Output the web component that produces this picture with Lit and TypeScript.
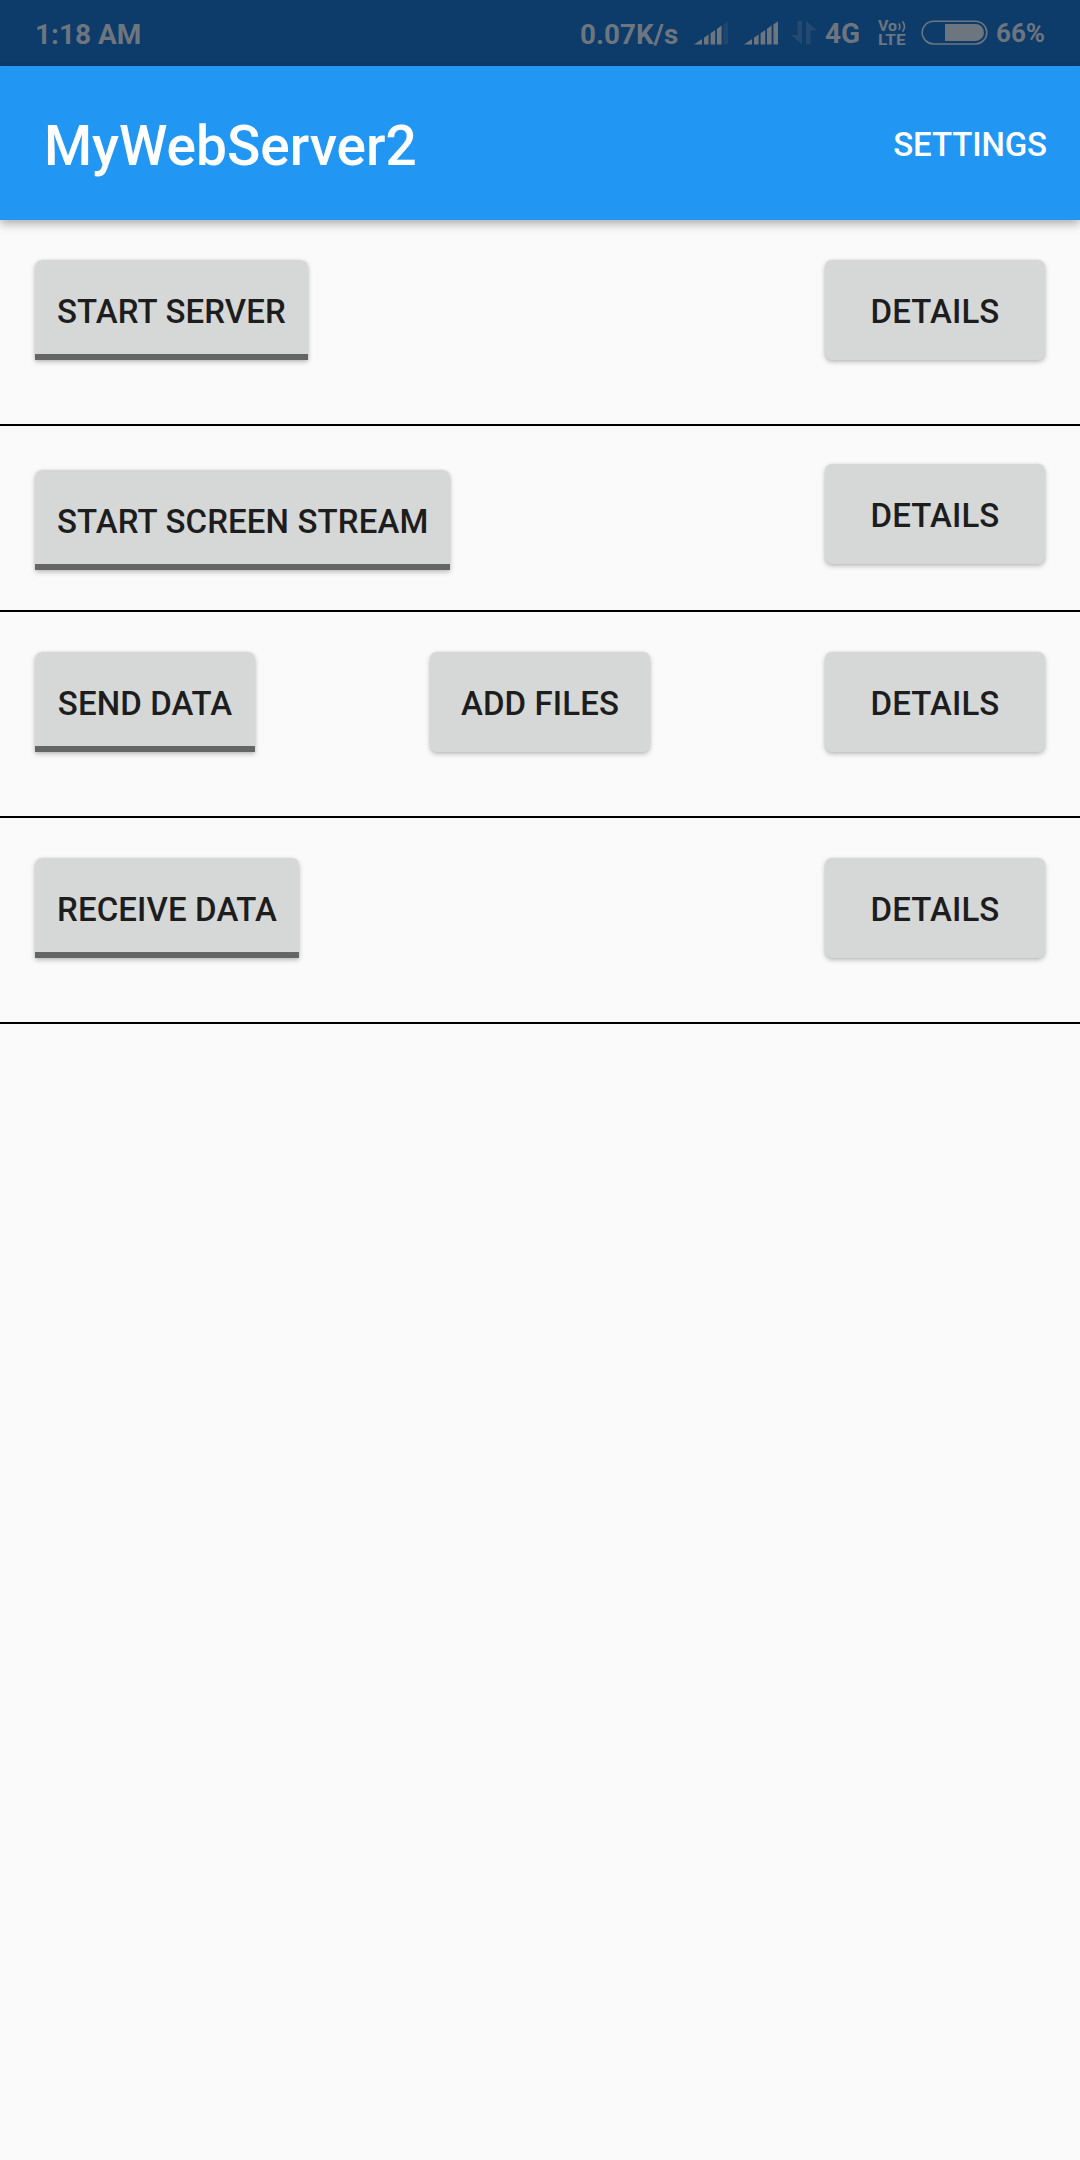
import { LitElement, html, css, svg } from "lit";
import { customElement, property } from "lit/decorators.js";
import { classMap } from "lit/directives/class-map.js";

@customElement("signal-bars")
class SignalBars extends LitElement {
  @property({ type: Number }) level = 5;

  static styles = css`
    :host { display: block; width: 34px; height: 24px; }
    .icon { display: block; }
    .bar { fill: #6d767f; }
    .off { fill: #21466e; }
  `;

  render() {
    const shapes = [
      "M0 23.5 L8 18 V23.5 Z",
      "M10 16.8 L14.6 13.6 V23.5 H10 Z",
      "M16.6 12.2 L21.2 9 V23.5 H16.6 Z",
      "M23 7.8 L27.6 4.6 V23.5 H23 Z",
      "M29.4 3.4 L34 0.2 V23.5 H29.4 Z",
    ];
    return html`<svg class="icon" width="34" height="24" viewBox="0 0 34 24">
      ${shapes.map((d, i) => svg`<path class=${i < this.level ? "bar" : "off"} d=${d}></path>`)}
    </svg>`;
  }
}

@customElement("status-bar")
class StatusBar extends LitElement {
  static styles = css`
    :host {
      display: flex; align-items: flex-start; box-sizing: border-box;
      height: 66px; padding: 0 35px; background: #0d3b6a; color: #6d767f;
      font: 700 28px/33px Roboto, sans-serif; white-space: nowrap;
    }
    .time { padding-top: 18px; flex: 1; }
    .speed { width: 114px; padding-top: 18px; font-size: 27.8px; }
    .sig { margin: 21px 16px 0 0; }
    .sig.last { margin-right: 13px; }
    .arrows { margin: 21px 8px 0 0; }
    .net { width: 52px; padding-top: 17px; }
    .volte { margin: 19px 15px 0 0; overflow: visible; }
    .battery { margin: 20px 8px 0 0; }
    .pct { width: 49px; padding-top: 17px; font-size: 26px; }
    .small { font: 700 14.5px Roboto, sans-serif; fill: #6d767f; }
    .faint { fill: #254a72; }
    .line { fill: none; stroke: #6d767f; stroke-width: 1.6; }
    .fill { fill: #6d767f; }
  `;

  render() {
    return html`
      <span class="time">1:18 AM</span>
      <span class="speed">0.07K/s</span>
      <signal-bars class="sig" .level=${4}></signal-bars>
      <signal-bars class="sig last" .level=${5}></signal-bars>
      <svg class="arrows" width="26" height="24" viewBox="0 0 26 24">
        <path class="faint" d="M6.5 0 H11 V23.5 L0 14 H6.5 Z M15 23.5 V0 L26 9.5 H19.5 V23.5 Z"></path>
      </svg>
      <span class="net">4G</span>
      <svg class="volte" width="29" height="32" viewBox="0 0 29 32">
        <text class="small" x="1" y="12" textLength="19" lengthAdjust="spacingAndGlyphs">Vo</text>
        <path class="line" d="M22 4.4 Q23.8 7.6 22 10.8 M25.4 2.2 Q29.6 7.5 25.4 12.8"></path>
        <text class="small" x="1" y="26" textLength="27.5" lengthAdjust="spacingAndGlyphs">LTE</text>
      </svg>
      <svg class="battery" width="67" height="25" viewBox="0 0 67 25">
        <rect class="line" x="1.2" y="1.2" width="64.6" height="22.8" rx="11.4"></rect>
        <path class="fill" d="M24 4 H54.5 A8.5 8.5 0 0 1 54.5 21 H24 Z"></path>
      </svg>
      <span class="pct">66%</span>
    `;
  }
}

@customElement("app-button")
class AppButton extends LitElement {
  @property() label = "";
  @property({ type: Boolean }) toggle = false;

  static styles = css`
    :host { display: block; }
    .btn {
      display: flex; align-items: center; justify-content: center; box-sizing: border-box;
      min-width: 220px; height: 100px; margin: 0; padding: 4px 22px 0; border: 0;
      border-radius: 7px; background: #d6d8d7; color: #1d1d1d;
      font: 500 33px/40px Roboto, sans-serif; letter-spacing: 0.12px; white-space: nowrap;
      box-shadow: 0 2px 5px rgba(0, 0, 0, 0.26), 0 0 2px rgba(0, 0, 0, 0.08);
    }
    .toggle {
      border-radius: 7px 7px 0 0;
      background: linear-gradient(#d6d8d7 94px, #646665 94px);
    }
  `;

  render() {
    return html`<button class=${classMap({ btn: true, toggle: this.toggle })}>${this.label}</button>`;
  }
}

@customElement("app-root")
class AppRoot extends LitElement {
  static styles = css`
    :host {
      display: flex; flex-direction: column; width: 1080px; height: 2160px;
      background: #fafafa; font-family: Roboto, sans-serif; overflow: hidden;
    }
    .appbar {
      display: flex; align-items: center; justify-content: space-between; box-sizing: border-box;
      height: 154px; padding: 6px 33px 0 44px; background: #2196f3; color: #fff;
      box-shadow: 0 4px 9px rgba(0, 0, 0, 0.3);
    }
    .title { margin: 0; font-weight: 500; font-size: 55px; line-height: 64px; }
    .action { padding-bottom: 2px; font-weight: 500; font-size: 33px; letter-spacing: -0.1px; line-height: 40px; }
    .row {
      display: grid; grid-template-columns: 1fr auto 1fr; align-items: start; box-sizing: border-box;
      height: 206px; padding: 40px 35px 0; border-bottom: 2px solid #000;
    }
    .stream { height: 186px; padding-top: 38px; }
    .stream .start { margin-top: 6px; }
    .start { justify-self: start; }
    .mid { grid-column: 2; }
    .details { grid-column: 3; justify-self: end; }
  `;

  render() {
    const rows = [
      { cls: "row", start: "START SERVER", mid: "" },
      { cls: "row stream", start: "START SCREEN STREAM", mid: "" },
      { cls: "row", start: "SEND DATA", mid: "ADD FILES" },
      { cls: "row", start: "RECEIVE DATA", mid: "" },
    ];
    return html`
      <status-bar></status-bar>
      <header class="appbar">
        <h1 class="title">MyWebServer2</h1>
        <span class="action">SETTINGS</span>
      </header>
      ${rows.map(
        (r) => html`<section class=${r.cls}>
          <app-button class="start" toggle .label=${r.start}></app-button>
          ${r.mid ? html`<app-button class="mid" .label=${r.mid}></app-button>` : ""}
          <app-button class="details" label="DETAILS"></app-button>
        </section>`
      )}
    `;
  }
}
